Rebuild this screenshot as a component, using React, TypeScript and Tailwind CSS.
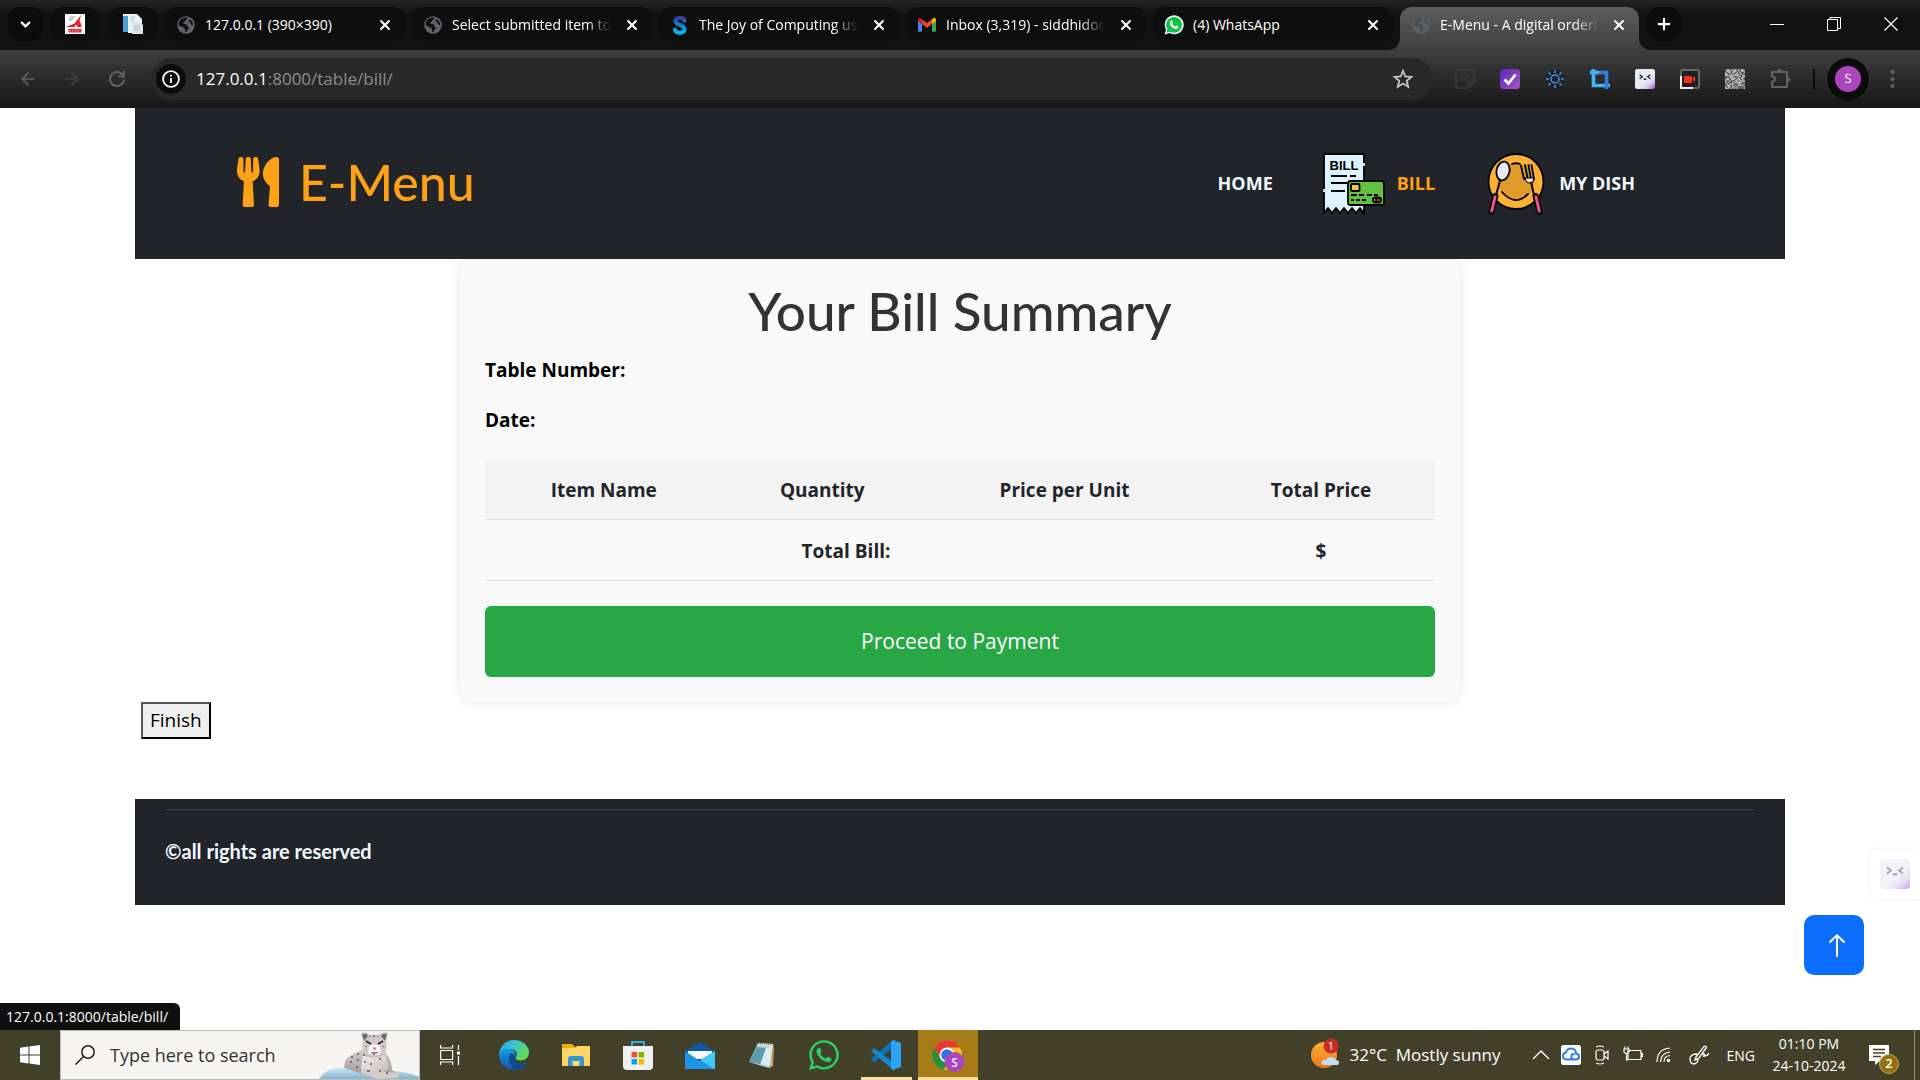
import React from "react";
import { FaUtensils, FaWhatsapp } from "react-icons/fa";
import { ChevronDown, X, Plus, ArrowLeft, ArrowRight, Star } from "lucide-react";

const ui = "font-['Open_Sans','Noto_Sans',sans-serif]";
const display = "font-['Lato','Noto_Sans',sans-serif]";

function Globe({ dim = false }: { dim?: boolean }) {
  return (
    <svg className="size-[18px] shrink-0" viewBox="0 0 18 18">
      <circle cx="9" cy="9" r="8.8" fill={dim ? "#5a6067" : "#5f6368"} />
      <path d="M8.6 1.6c2.6.1 1.9 1.7.6 2.2C7.800 4.300 8.700 5.800 7 6.200c-1.500.5-.6 2 .8 1.900 2-.1 2.400 1.200 2.500 2.300.2 1.100 1.900.3 1.600 1.800-.3 1.300-1.700 1-1.800 2.400-.1 1.400-1.100 1.900-1.800.9-.7-1.100.2-2.200-.8-3.300C6.300 11 3.500 10.400 1.700 9.200 1.600 5 4.500 1.700 8.600 1.600z" fill={dim ? "#484c50" : "#0f0f0f"} />
      <path d="M12.500 3.200c2 1 3.600 3 3.700 5.600-1.300.5-2.600-.2-2.700-1.600-.1-1.500-1.900-1.400-1.900-2.600 0-.7.300-1.200.9-1.400z" fill={dim ? "#484c50" : "#0f0f0f"} />
    </svg>
  );
}

function SwayamIcon() {
  return (
    <svg className="size-[20px] shrink-0" viewBox="0 0 18 20" fill="none">
      <defs>
        <linearGradient id="sw" x1="0" y1="0" x2="0" y2="1">
          <stop offset="0" stopColor="#3a3c9c" />
          <stop offset=".5" stopColor="#0c86d6" />
          <stop offset="1" stopColor="#08b4ea" />
        </linearGradient>
      </defs>
      <path d="M13.500 5.500C12.500 2 4.500 2 4.500 6c0 4.500 9 3.200 9 8.300 0 4.500-8.500 4.500-9.500.5" stroke="url(#sw)" strokeWidth="4.200" strokeLinecap="round" />
    </svg>
  );
}

function GmailIcon() {
  return (
    <svg className="size-[18px] shrink-0" viewBox="0 0 18 18">
      <path d="M0 4.500v10c0 .8.500 1.300 1.200 1.300H4V8z" fill="#4285f4" />
      <path d="M18 4.500v10c0 .8-.5 1.300-1.200 1.300H14V8z" fill="#34a853" />
      <path d="M14 3.500V8l4-3V4c0-2-2-2.500-3-1.500z" fill="#fbbc04" />
      <path d="M4 3.500V8L0 5V4c0-2 2-2.500 3-1.500z" fill="#c5221f" />
      <path d="M4 3.200 9 7l5-3.800V8l-5 3.900L4 8z" fill="#ea4335" />
    </svg>
  );
}

function WhatsTabIcon() {
  return (
    <svg className="size-5 shrink-0" viewBox="0 0 20 20">
      <path d="M.6 19.500 2 14.600A9.500 9.500 0 1 1 5.600 18.100z" fill="#fff" />
      <path d="M2.400 17.700 3.400 14.200A7.900 7.900 0 1 1 6.200 16.800z" fill="#0fc143" />
      <path d="M7.200 5.400c.6-.2.900 0 1.100.6l.6 1.500c.1.500-.7 1-.6 1.300.6 1.300 1.600 2.200 2.900 2.700.4.100.9-1.100 1.300-1l1.800.9c.6.300-.1 2.700-2.400 2.500-3-.3-5.700-3-6-5.700-.1-1.300.6-2.600 1.300-2.800z" fill="#fff" />
    </svg>
  );
}

const tabs = [
  { title: "127.0.0.1 (390×390)", icon: <Globe /> },
  { title: "Select submitted item to", icon: <Globe />, fade: true },
  { title: "The Joy of Computing us", icon: <SwayamIcon />, fade: true },
  { title: "Inbox (3,319) - siddhidoo", icon: <GmailIcon />, fade: true },
  { title: "(4) WhatsApp", icon: <WhatsTabIcon /> },
  { title: "E-Menu - A digital orderi", icon: <Globe dim />, fade: true, active: true },
];

function TabStrip() {
  return (
    <div className="flex h-[50px] items-start bg-linear-to-b from-[#242424] via-[#111111] via-30% to-[#111111] pt-[7px] pl-2">
      <button aria-label="Search tabs" className="flex h-[34px] w-[35px] items-center justify-center rounded-xl bg-[#0b0b0b]">
        <ChevronDown className="size-[15px] text-white" strokeWidth={3.500} />
      </button>
      <button aria-label="Pinned tab" className="ml-2 flex h-[34px] w-12 items-center justify-center rounded-xl bg-[#0e0e0e]">
        <svg className="size-5" viewBox="0 0 20 20">
          <path d="M0 0h20v20H0z" fill="#fff" />
          <path d="M5 2h6l-4 5H3zM14 3l4 8h-5z" fill="#cfcfcf" />
          <path d="M16 1 9.500 9.500 1 13h8.500l1.500-2.500 1.800 2.700h4L14.500 7z" fill="#e5212b" />
          <path d="M3.500 15h13v3.500h-13z" fill="#e5212b" />
          <path d="M4.500 16.800h11" stroke="#fff" strokeWidth=".7" strokeDasharray="1.500 1.200" />
        </svg>
      </button>
      <button aria-label="Pinned tab" className="ml-[10px] flex h-[34px] w-12 items-center justify-center rounded-xl bg-[#0e0e0e]">
        <svg className="size-5" viewBox="0 0 20 20">
          <path d="M0 0h14l5 5v14H5v-1H0z" fill="#e9f3fa" />
          <path d="M0 2h5v16H0z" fill="#4a9fd8" />
          <path d="M7 3h5M7 5h5M7 7h4" stroke="#b9cfdf" />
          <path d="M9 8h8l3 3v9H9z" fill="#dbe6ee" />
          <path d="M11 12h6M11 14h6M11 16h6" stroke="#aebfcc" />
        </svg>
      </button>
      <div className="ml-2 flex gap-[7px]">
        {tabs.map((t) => (
          <div
            key={t.title}
            className={
              t.active
                ? "relative flex h-[43px] w-[239px] items-start rounded-t-xl bg-linear-to-b from-[#5e5e5e] to-[#3f3f3f] text-white"
                : "flex h-[34px] w-[240px] items-start rounded-xl bg-[#0e0e0e] text-white"
            }
          >
            {t.active && (
              <>
                <svg className="absolute bottom-0 -left-3 size-3" viewBox="0 0 12 12"><path d="M12 0v12H0A12 12 0 0 0 12 0z" fill="#3f3f3f" /></svg>
                <svg className="absolute -right-3 bottom-0 size-3" viewBox="0 0 12 12"><path d="M0 0v12h12A12 12 0 0 1 0 0z" fill="#3f3f3f" /></svg>
              </>
            )}
            <div className="flex h-[34px] w-full items-center pt-px pr-3 pl-[11px]">
              <div className="flex w-5 justify-center">{t.icon}</div>
              <span className={t.fade ? "ml-[9px] w-[159px] overflow-hidden text-[14px] whitespace-nowrap [mask-image:linear-gradient(to_right,black_84%,transparent_100%)]" : "ml-[9px] w-[159px] overflow-hidden text-[14px] whitespace-nowrap"}>
                {t.title}
              </span>
              <button aria-label={"Close " + t.title} className="ml-auto">
                <X className="size-4" strokeWidth={3} />
              </button>
            </div>
          </div>
        ))}
      </div>
      <button aria-label="New tab" className="ml-2 flex size-[34px] items-center justify-center rounded-xl bg-[#0b0b0b] text-white">
        <Plus className="size-[18px]" strokeWidth={3} />
      </button>
      <div className="mr-[22px] ml-auto flex h-[34px] items-center gap-[43px]">
        <button aria-label="Minimize"><svg className="size-[14px]" viewBox="0 0 14 14"><path d="M0 7.500h14" stroke="#fff" /></svg></button>
        <button aria-label="Restore"><svg className="size-[14px]" viewBox="0 0 14 14" fill="none" stroke="#fff"><path d="M.5 2.500h10v11H.5zM3 2.500V.5h10.500v11h-3" /></svg></button>
        <button aria-label="Close window"><svg className="size-[14px]" viewBox="0 0 14 14"><path d="m.5.5 13 13m0-13-13 13" stroke="#fff" strokeWidth="1.200" /></svg></button>
      </div>
    </div>
  );
}

const qrCells: [number, number][] = [];
for (let y = 0; y < 14; y++) for (let x = 0; x < 14; x++) if ((x * 7 + y * 13 + x * y * 5 + ((x * x) ^ (y * 3))) % 5 < 2) qrCells.push([x, y]);

function Face({ soft = false }: { soft?: boolean }) {
  return (
    <svg className="size-full" viewBox="0 0 30 30">
      <defs>
        <linearGradient id={soft ? "fs" : "fd"} x1=".2" y1=".1" x2="1" y2="1">
          <stop offset=".5" stopColor={soft ? "#f0f4f8" : "#e6e9f6"} />
          <stop offset=".72" stopColor={soft ? "#eadff5" : "#d9c8f0"} />
          <stop offset="1" stopColor={soft ? "#c9a0ea" : "#9a4fdc"} />
        </linearGradient>
      </defs>
      <rect width="30" height="30" rx="3.500" fill={soft ? "url(#fs)" : "url(#fd)"} />
      <path d="m7 8.500 4 3-4 3M23 8.500l-4 3 4 3M13 14.500q2 2 4 0" fill="none" stroke={soft ? "#a5a8b0" : "#1c2233"} strokeWidth="2" />
    </svg>
  );
}

function Toolbar() {
  return (
    <div className="flex h-[58px] items-center bg-linear-to-b from-[#3f3f3f] to-[#171717] pl-[18px]">
      <button aria-label="Back"><ArrowLeft className="size-5 text-[#5f6368]" strokeWidth={2} /></button>
      <button aria-label="Forward" className="ml-6"><ArrowRight className="size-5 text-[#434343]" strokeWidth={2} /></button>
      <button aria-label="Reload" className="ml-[26px]">
        <svg className="size-[18px]" viewBox="0 0 18 18" fill="none" stroke="#5f6368" strokeWidth="2"><path d="M14.800 5A7 7 0 1 0 16 9.500M16 1v5.500h-5.500" /></svg>
      </button>
      <div className="ml-[25px] flex h-[42px] flex-1 items-center rounded-full bg-[#282828] pr-[19px] pl-[5px]">
        <button aria-label="Site information" className="flex size-[30px] items-center justify-center rounded-full bg-[#0b0b0b]">
          <svg className="size-[18px]" viewBox="0 0 18 18" fill="none" stroke="#fff" strokeWidth="1.800"><circle cx="9" cy="9" r="7.900" /><path d="M9 8v5M9 4.800v1.800" /></svg>
        </button>
        <div className="ml-[10px] flex-1 text-[17px] text-white">
          127.0.0.1<span className="text-[#8d8d8d]">:8000/table/bill/</span>
        </div>
        <button aria-label="Bookmark">
          <svg className="size-[22px]" viewBox="0 0 22 22" fill="none" stroke="#c7c7c7" strokeWidth="1.800"><path d="m11 2.800 2.300 5.700 6.100.4-4.700 4 1.500 6L11 15.600l-5.200 3.300 1.500-6-4.700-4 6.100-.4z" /></svg>
        </button>
      </div>
      <div className="ml-[22px] flex items-center gap-[25px]">
        <svg className="size-5" viewBox="0 0 20 20" fill="none" stroke="#3a3a3a" strokeWidth="1.600"><path d="M3 1h14q2 0 2 2v10l-6 6H3q-2 0-2-2V3q0-2 2-2zM13 19v-6h6M5 7h10M5 11h6" /></svg>
        <svg className="size-5" viewBox="0 0 20 20">
          <defs><linearGradient id="ck" x1="0" y1="0" x2="1" y2="1"><stop stopColor="#5527b8" /><stop offset="1" stopColor="#a955c9" /></linearGradient></defs>
          <rect width="20" height="20" rx="3.500" fill="url(#ck)" /><path d="m4.500 10.500 4 4 7-9" fill="none" stroke="#fff" strokeWidth="2.800" />
        </svg>
        <svg className="size-5" viewBox="0 0 20 20" fill="none" stroke="#4c8fe8" strokeWidth="1.500">
          <circle cx="10" cy="10" r="10" fill="#20242a" stroke="none" /><circle cx="10" cy="10" r="4" />
          <path d="M10 1v3M10 16v3M1 10h3M16 10h3M3.500 3.500l2.200 2.200M14.300 14.300l2.200 2.200M16.500 3.500l-2.200 2.200M5.700 14.300l-2.200 2.200" />
        </svg>
        <svg className="size-5" viewBox="0 0 20 20" fill="none" strokeWidth="3.600"><path d="M3.500 0v16.500H20" stroke="#45b3f7" /><path d="M0 3.500h16.500V20" stroke="#2f7de0" /><path d="M0 3.500h9" stroke="#45b3f7" /></svg>
        <div className="size-5"><Face /></div>
        <svg className="size-5" viewBox="0 0 20 20"><rect x="1" y="1" width="18" height="18" rx="2" fill="#202020" stroke="#686868" strokeWidth="2" /><path d="M1 7v12h12" fill="none" stroke="#eee" strokeWidth="2" /><path d="M4 7h8v7H4zM12 10l3-3v6z" fill="#f0301e" /></svg>
        <svg className="size-5" viewBox="0 0 14 14"><path d="M0 0h14v14H0z" fill="#b5b5b5" />{qrCells.map(([x, y]) => <rect key={x + "-" + y} x={x} y={y} width="1" height="1" fill="#444" />)}</svg>
        <button aria-label="Extensions">
          <svg className="size-[22px]" viewBox="0 0 22 22">
            <path d="M2 4h15v15H2v-5q3-1 3-3t-3-3z" fill="none" stroke="#5f6368" strokeWidth="2" strokeLinejoin="round" />
            <path d="M7 4q0-3 2.500-3T12 4zM17 9q3.500 0 3.500 2.500T17 14z" fill="#5f6368" />
          </svg>
        </button>
      </div>
      <div className="ml-[21px] h-5 w-[2px] bg-[#0b0b0b]" />
      <button aria-label="Profile" className="ml-3 flex size-[42px] items-center justify-center rounded-full bg-[#0b0b0b]">
        <span className="flex size-[26px] items-center justify-center rounded-full bg-[#ab47bc] text-[13px] text-white">S</span>
      </button>
      <button aria-label="Menu" className="mr-[25px] ml-[21px]">
        <svg className="h-[18px] w-[5px]" viewBox="0 0 5 18" fill="#5f6368"><circle cx="2.500" cy="2" r="2" /><circle cx="2.500" cy="9" r="2" /><circle cx="2.500" cy="16" r="2" /></svg>
      </button>
    </div>
  );
}

function BillIcon() {
  return (
    <svg className="size-[62px]" viewBox="0 0 62 62" stroke="#000" strokeWidth="1.800" strokeLinejoin="round">
      <path d="M1 1h40v60l-4-6-4 5-4-5-4 5-4-5-4 5-4-5-4 5-4-5-4 5z" fill="#dcf4ff" />
      <path d="M1 36v3M41 10v3" stroke="#dcf4ff" />
      <text x="21" y="17" textAnchor="middle" fontFamily="Liberation Sans" fontWeight="700" fontSize="13" fill="#000" strokeWidth="0">BILL</text>
      <path d="M8 23h16m3 0h6M8 30h22M8 38h14" />
      <rect x="25" y="28" width="36" height="24" rx="2.500" fill="#62c13f" />
      <rect x="28" y="31" width="8.500" height="7" rx="1" fill="#fdc233" />
      <path d="M28 42h6m2 0h5m3 0h5m2 0h4M28 47h3m2 0h4m2 0h4" fill="none" />
      <circle cx="52.500" cy="47" r="2.500" fill="#f5a623" /><circle cx="55.500" cy="47" r="2.500" fill="#b63b20" />
    </svg>
  );
}

function DishIcon() {
  return (
    <svg className="h-[62px] w-[58px]" viewBox="0 0 58 62" stroke="#000" strokeWidth="1.800" strokeLinecap="round">
      <circle cx="29" cy="28.500" r="27.500" fill="#fbb136" />
      <circle cx="29" cy="28.500" r="18.500" fill="#e09b2d" stroke="none" />
      <path d="M15 39q13 15 26 2M25 11q4-1.500 8 0" fill="none" />
      <path d="m13 28-4 14" fill="none" strokeWidth="2" />
      <ellipse cx="16" cy="18" rx="6.500" ry="9.500" transform="rotate(12 16 18)" fill="#e7e7ee" />
      <path d="m8.500 43-4 16" strokeWidth="6" /><path d="m8 44-3.300 14" stroke="#f4528d" strokeWidth="3" />
      <path d="m44 29 3 13" strokeWidth="2" fill="none" />
      <path d="m34 13 3 13h10l-2.500-14M38 12l2.500 13M41.500 12l2.200 13" fill="none" strokeWidth="1.800" />
      <path d="M38 25h9q0 5-4.500 5-3.500 0-4.500-5z" fill="#e7e7ee" strokeWidth="1.200" />
      <path d="m48.500 43 4 16" strokeWidth="6" /><path d="m49 44 3.300 14" stroke="#f4528d" strokeWidth="3" />
    </svg>
  );
}

function BillPage() {
  return (
    <main className="relative flex-1 bg-white">
      <div className="mx-[135px]">
        <header className="flex h-[151px] items-center justify-between bg-[#212529] pr-[150px] pl-[102px] text-[#f1f8ff]">
          <a href="#home" className={"flex items-center gap-5 pb-[3px] text-[#fea116] " + display}>
            <FaUtensils className="h-[50px] w-[42px]" preserveAspectRatio="none" />
            <span className="text-[50px] leading-[60px] font-medium">E-Menu</span>
          </a>
          <nav className="flex items-center text-[18px] font-bold">
            <a href="#home">HOME</a>
            <a href="#bill" className="ml-[50px] flex items-center gap-3 text-[#fea116]"><BillIcon />BILL</a>
            <a href="#dish" className="ml-[52px] flex items-center gap-[14px]"><DishIcon />MY DISH</a>
          </nav>
        </header>

        <section className="mx-auto w-full max-w-[1000px] rounded-[12px] bg-[#f9f9f9] px-[25px] pt-[22px] pb-[25px] shadow-[0_0_12px_rgba(0,0,0,0.1)] [clip-path:inset(0_-20px_-20px_-20px)]">
          <h1 className={"text-center text-[53px] leading-[60px] font-medium text-[#333] " + display}>Your Bill Summary</h1>
          <p className="mt-[14px] text-[19px] leading-[30px] font-bold text-black">Table Number:</p>
          <p className="mt-5 text-[19px] leading-[30px] font-bold text-black">Date:</p>
          <table className="mt-6 w-full table-fixed border-separate border-spacing-0 text-[19px] leading-[30px] font-bold text-[#212529] [&_td]:border-b [&_td]:border-[#ddd] [&_td]:pt-px [&_th]:border-b [&_th]:border-[#ddd] [&_th]:pt-px">
            <colgroup>
              <col className="w-[25%]" />
              <col className="w-[21%]" />
              <col className="w-[30%]" />
              <col className="w-[24%]" />
            </colgroup>
            <thead>
              <tr className="h-[61px] bg-[#f3f3f3]">
                <th scope="col">Item Name</th>
                <th scope="col">Quantity</th>
                <th scope="col">Price per Unit</th>
                <th scope="col">Total Price</th>
              </tr>
            </thead>
            <tbody>
              <tr className="h-[61px]">
                <th colSpan={3} scope="row">Total Bill:</th>
                <td className="text-center">$</td>
              </tr>
            </tbody>
          </table>
          <button className="mt-[25px] h-[71px] w-full rounded-[6px] bg-[#28a745] text-[21px] text-white">Proceed to Payment</button>
        </section>

        <button className="ml-[6px] block h-[37px] border-2 border-t-[#555] border-r-black border-b-black border-l-[#555] bg-[#efefef] px-[7px] text-[19px] leading-[33px] text-black">
          Finish
        </button>

        <footer className="mt-[60px] h-[106px] bg-[#212529] px-[30px] pt-[10px]">
          <hr className="border-[#3a3d41]" />
          <p className={"mt-[26px] text-[20px] leading-[30px] font-bold text-[#f1f8ff] " + display}>©all rights are reserved</p>
        </footer>
      </div>

      <button aria-label="Assistant" className="absolute right-0 bottom-[131px] h-[50px] w-[50px] rounded-l-lg bg-white p-[10px] shadow-[0_0_4px_rgba(0,0,0,0.08)]">
        <Face soft />
      </button>
      <a href="#top" aria-label="Back to top" className="absolute right-14 bottom-[55px] flex size-[60px] items-center justify-center rounded-[10px] bg-[#0d6efd] pl-[6px]">
        <svg className="h-[23px] w-4" viewBox="0 0 16 23" fill="none" stroke="#fff" strokeWidth="2" strokeLinecap="round" strokeLinejoin="round"><path d="M8 22V1.500M1 8l7-6.800L15 8" /></svg>
      </a>
      <div className="absolute bottom-0 left-0 flex h-[27px] w-[180px] items-center rounded-tr-[6px] bg-[#0f0f0f] pl-[6px] text-[14px] text-white">
        127.0.0.1:8000/table/bill/
      </div>
    </main>
  );
}

function Leopard() {
  return (
    <svg className="h-[47px] w-[100px]" viewBox="0 0 100 47">
      <defs>
        <linearGradient id="ice" x1="0" y1="0" x2="0" y2="1"><stop stopColor="#cde7f5" /><stop offset="1" stopColor="#83b3cc" /></linearGradient>
        <linearGradient id="fur" x1="0" y1="0" x2="0" y2="1"><stop stopColor="#d8cfcb" /><stop offset="1" stopColor="#97969c" /></linearGradient>
        <linearGradient id="chest" x1="0" y1="0" x2="1" y2="1"><stop stopColor="#f3efeb" /><stop offset="1" stopColor="#bfb8b8" /></linearGradient>
      </defs>
      <path d="M0 47q7-11 20-11 15 0 36 5 25-5 44 4v2z" fill="url(#ice)" />
      <path d="M25 36q0-10 9-14l10-5 22 2q7 10 7 19l7 5-6 3H56z" fill="url(#fur)" />
      <path d="M44 23q10 6 22 0l4 14-12 6-16-6z" fill="url(#chest)" />
      <path d="M42 38q15-2 24 2l13 1q3 4-2 5l-19 1-16-6z" fill="#d3cdcb" />
      <path d="M42 1q6-2 9 2h8q4-4 10-2l-2 9q3 7-3 11-9 5-17 0-5-4-3-11z" fill="#cfcac8" />
      <path d="M43 2q5-1 6 2l-4 5zM68 2q-5-1-6 2l4 5z" fill="#6e6a70" />
      <path d="M50 14q5-3 11 0l1 7q-6 4-13 0z" fill="#faf7f4" />
      <path d="m47 9 5 3M64 9l-5 3" stroke="#222c35" strokeWidth="2" fill="none" />
      <path d="M53 15.500h5l-2.500 3z" fill="#e0796f" /><path d="M52 20.500q3.500 1 7 0" fill="none" stroke="#49454a" />
      <path d="M51 4v1m4-2v2m4-1v1m-12 9v1m17-1v1M32 25h2m4-3h2m-9 8h2m5-2h2m-3 7h2m5-12h2m-1 7h2m4 2h2m7-5h2m-8-5h2m-8 17h3m16 2h2m-9-2h2" stroke="#5b5960" strokeWidth="1.400" />
    </svg>
  );
}

function Taskbar() {
  const slot = "flex h-[50px] w-[62px] items-center justify-center";
  return (
    <div className="flex h-[50px] items-center bg-[#434029] text-white">
      <button aria-label="Start" className="flex h-[50px] w-[60px] items-center justify-center">
        <svg className="size-5" viewBox="0 0 20 20" fill="#fff"><path d="M0 2.700 8.500 1.500v8H0zM9.500 1.400 20 0v9.500H9.500zM0 10.500h8.500v8L0 17.300zM9.500 10.500H20V20L9.500 18.600z" /></svg>
      </button>
      <div className="relative h-[50px] w-[360px] border border-[#bdbdbd] bg-[#f6f4f1]">
        <svg className="absolute top-[14px] left-[14px] size-5" viewBox="0 0 20 20" fill="none" stroke="#222" strokeWidth="1.500"><circle cx="13" cy="7" r="6.200" /><path d="M8.500 11.500.5 19.500" /></svg>
        <input aria-label="Type here to search" placeholder="Type here to search" className="h-full w-full bg-transparent pl-[49px] text-[18px] text-[#333] outline-none placeholder:text-[#333]" />
        <div className="pointer-events-none absolute right-0 bottom-0"><Leopard /></div>
      </div>
      <button aria-label="Task view" className="mr-[3px] flex h-[50px] w-[60px] items-center justify-center">
        <svg className="size-5" viewBox="0 0 20 20" fill="none" stroke="#fff" strokeWidth="1.200"><path d="M.6 5.500h12v9H.6zM.6 0v3h12V0M.6 20v-3h12v3M18.500 0v5M18.500 11v9" /><path d="M17 6.500h3v3h-3z" fill="#fff" stroke="none" /></svg>
      </button>
      <button aria-label="Edge" className={slot}>
        <svg className="size-[30px]" viewBox="0 0 30 30">
          <defs>
            <linearGradient id="e1" x1="0" y1="0" x2="1" y2=".4"><stop stopColor="#2c9be0" /><stop offset=".5" stopColor="#36c3d0" /><stop offset="1" stopColor="#62d95c" /></linearGradient>
            <linearGradient id="e2" x1="0" y1="0" x2="0" y2="1"><stop stopColor="#1b9de2" /><stop offset="1" stopColor="#0d55a8" /></linearGradient>
          </defs>
          <path d="M0 14C1 6 7 0 15 0c9 0 15 6 15 12.500 0 5-4 8-8.500 8-4 0-6-1.500-4.500-3.500 3-4-1-8-6-8C6 9 2 11 0 14z" fill="url(#e1)" />
          <path d="M0 14c2-4 7-6 11-5 5 1 7 5 5 8-2 4 1 7 6 7 3 0 5-1 6-1-3 5-8 7-13 7C6 30 0 23 0 14z" fill="url(#e2)" />
          <path d="M10.500 15c-2 6 1 13 8 14.500 4-.5 7-3 9.500-6.500-6 3-13 1-12-6 .3-3-4-5-5.500-2z" fill="#0c4a93" />
        </svg>
      </button>
      <button aria-label="File Explorer" className={slot}>
        <svg className="size-7" viewBox="0 0 28 28"><path d="M0 3h10l3 3h15v19H0z" fill="#f0a90f" /><path d="M0 7h13l2-2h13v20H0z" fill="#ffd666" /><path d="M6 25v-7q0-3 3-3h10q3 0 3 3v7h-4.500v-5h-7v5z" fill="#3a91d6" /></svg>
      </button>
      <button aria-label="Microsoft Store" className={slot}>
        <svg className="size-[30px]" viewBox="0 0 30 30"><path d="M9 6V2h12v4" fill="none" stroke="#2bb0ec" strokeWidth="2" /><path d="M0 6h30v20q0 4-4 4H4q-4 0-4-4z" fill="#f0f0f0" /><path d="M8.500 12H14v5.500H8.500z" fill="#f25022" /><path d="M15.500 12H21v5.500h-5.500z" fill="#7fba00" /><path d="M8.500 19H14v5.500H8.500z" fill="#00a4ef" /><path d="M15.500 19H21v5.500h-5.500z" fill="#ffb900" /></svg>
      </button>
      <button aria-label="Mail" className={slot}>
        <svg className="size-[30px]" viewBox="0 0 30 30"><path d="M0 11 15 2l15 9v4H0z" fill="#0c59a4" /><path d="M3 11h24v8H3z" fill="#fafafa" /><path d="M0 11l15 10 15-10v18H0z" fill="#1c94e4" /><path d="M30 11 15 20l14 9h1z" fill="#42c8f5" /></svg>
      </button>
      <button aria-label="Notepad" className={slot}>
        <svg className="h-[27px] w-7" viewBox="0 0 28 27">
          <path d="m23 3 3 1-1 20-4 2z" fill="#c9a36a" />
          <path d="m10 1 15 1-4 24L1 20z" fill="#a9d4da" />
          <path d="m9 5 9 1-6 16L1 20z" fill="#5b9da8" />
          <path d="m18 6 6-1-2 19-9-2z" fill="#d9eef0" />
          <path d="m10 1 15 1-.5 3L9 4z" fill="#ddd" />
          <path d="M10 1.500l14 1" stroke="#777" strokeWidth="1.500" strokeDasharray="1 1" />
        </svg>
      </button>
      <button aria-label="WhatsApp" className={slot}><FaWhatsapp className="size-[34px] text-[#25d366]" /></button>
      <button aria-label="VS Code" className="flex h-[50px] w-[62px] flex-col items-center">
        <svg className="mt-[10px] size-[30px] shrink-0" viewBox="0 0 30 30"><path d="M22 0 0 19l3 3 19-14z" fill="#0c73bb" /><path d="m0 11 3-3 19 14v8z" fill="#1586cd" /><path d="m22 0 8 3v24l-8 3-2-2V2z" fill="#2aa4f3" /></svg>
        <span className="mt-[7px] h-[3px] w-[51px] bg-[#ffdf9e]" />
      </button>
      <button aria-label="Chrome" className="ml-px flex h-[50px] w-[60px] flex-col items-center bg-[#a57c17]">
        <svg className="mt-[10px] h-8 w-[34px] shrink-0" viewBox="0 0 34 32">
          <circle cx="16" cy="15" r="15" fill="#fbc116" />
          <path d="M3 7.500A15 15 0 0 1 29 7.500H16L10 19z" fill="#e33b2e" />
          <path d="M3 7.500 9.500 18.700 16 22.500 13 29.700A15 15 0 0 1 3 7.500z" fill="#25913c" />
          <circle cx="16" cy="15" r="7.500" fill="#fff" /><circle cx="16" cy="15" r="5.800" fill="#2f73e8" />
          <circle cx="23.500" cy="22" r="10" fill="#ab47bc" />
          <text x="23.500" y="26.500" textAnchor="middle" fontFamily="Open Sans" fontSize="12" fontWeight="600" fill="#f5e4f8">S</text>
        </svg>
        <span className="mt-[5px] h-[3px] w-full bg-[#ffdf9e]" />
      </button>

      <div className="ml-auto flex h-[50px] items-center">
        <svg className="h-9 w-7" viewBox="0 0 28 36">
          <defs><linearGradient id="sun" x1="0" y1="0" x2="0" y2="1"><stop stopColor="#f9b233" /><stop offset="1" stopColor="#f0741e" /></linearGradient></defs>
          <circle cx="13" cy="18" r="13" fill="url(#sun)" />
          <path d="M13 28q-4-1-2-4 2-2 4-1 3-5 8-2 2 1 2 2 3 0 3 3 0 2-3 2z" fill="#c3dafa" />
          <circle cx="20" cy="9" r="7.500" fill="#ca2b22" />
          <text x="20" y="13" textAnchor="middle" fontFamily="Open Sans" fontSize="11" fill="#fff">1</text>
        </svg>
        <span className="ml-[10px] text-[17px] whitespace-pre">32°C  Mostly sunny</span>
        <div className="ml-[31px] flex items-center gap-[11px]">
          <svg className="size-[18px]" viewBox="0 0 18 18" fill="none" stroke="#fff" strokeWidth="1.400"><path d="m1 13 8-8 8 8" /></svg>
          <svg className="size-5" viewBox="0 0 20 20"><rect width="20" height="20" rx="2.500" fill="#fff" /><path d="M14.500 14.500H6q-4 0-4-3.500 0-3 3-3.500 1-4 5-4 5 0 5 5 3 .5 3 3 0 3-3.500 3zM14.500 14.500q-5 0-4-4 1-2 3-1" fill="none" stroke="#2f7cf0" strokeWidth="2" /></svg>
          <svg className="size-5" viewBox="0 0 20 20" fill="none" stroke="#fff" strokeWidth="1.200"><rect x="4" y="5" width="8" height="10" rx="2" /><path d="m12 9 4-3v8l-4-3M4 2q4-2 8 0M4 18q4 2 8 0" /></svg>
          <svg className="size-5" viewBox="0 0 20 20" fill="none" stroke="#fff" strokeWidth="1.200"><path d="M5 5.500h13v9H5zM18.500 8.500h1v3h-1M1 4h5v3L3.500 9 1 7zM2 1.500V4M5 1.500V4M3.500 9v6H5" /></svg>
          <svg className="size-5" viewBox="0 0 20 20" fill="none" stroke="#fff" strokeWidth="1.200"><path d="M3 17Q3 4 16 3M6.500 17Q7 8 16 7M10 17q0-6 6-6.500" /><circle cx="14.500" cy="15.500" r="1.700" fill="#fff" stroke="none" /></svg>
          <svg className="ml-1 size-5" viewBox="0 0 20 20" fill="none" stroke="#fff" strokeWidth="1.300"><path d="M7 12 15 1.500q2-1 2.500 1L10 13l-4 2zM8 9q-7 0-7 5 0 5 4 5 4-1 4-5M12 10q3-2 4 0 0 2-2 1 5 0 6-3" /></svg>
        </div>
        <span className="ml-[18px] text-[14px]">ENG</span>
        <div className="ml-[15px] w-[78px] text-center text-[14px] leading-[22px]"><div>01:10 PM</div><div>24-10-2024</div></div>
        <button aria-label="Notifications, 2 new" className="relative ml-[21px] h-[50px] w-[45px]">
          <svg className="absolute top-[15px] left-0 size-5" viewBox="0 0 20 20"><path d="M0 0h20v16h-9l-5 4v-4H0z" fill="#fff" /><path d="M4 4.500h12M4 8h12M4 11.500h8" stroke="#434029" strokeWidth="1.300" /></svg>
          <span className="absolute top-6 left-[10px] flex size-5 items-center justify-center rounded-full border border-[#c1a55b] bg-[#92700f] text-[13px] font-semibold">2</span>
        </button>
        <div className="mr-[5px] h-[50px] w-px bg-[#8c8a7c]" />
      </div>
    </div>
  );
}

export default function App() {
  return (
    <div id="top" className={"flex min-h-screen flex-col bg-white " + ui}>
      <TabStrip />
      <Toolbar />
      <BillPage />
      <Taskbar />
    </div>
  );
}
